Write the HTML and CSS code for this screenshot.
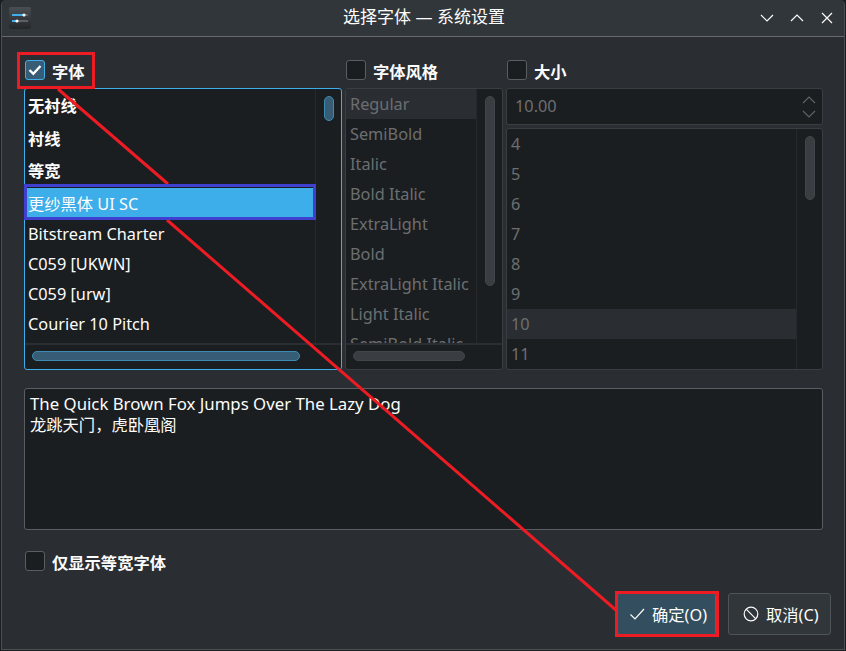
FILE: index.html
```html
<!DOCTYPE html>
<html>
  <head>
    <title>选择字体 — 系统设置</title>
    <meta charset="utf-8" />
    <link rel="stylesheet" href="styles.css">
  </head>
  <body>
    <div class="window">
      <header class="titlebar">
        <svg class="app-icon" width="22" height="22" viewBox="0 0 22 22">
          <defs>
            <linearGradient id="iconBg" x1="0" y1="0" x2="0" y2="1">
              <stop offset="0" stop-color="#4a4f54" />
              <stop offset="1" stop-color="#24272a" />
            </linearGradient>
          </defs>
          <rect width="22" height="22" rx="2" fill="url(#iconBg)" />
          <path d="M3 8h12" stroke="#3daee9" stroke-width="2" />
          <path d="M15 8h4M8 14h11" stroke="#6b7075" stroke-width="1.5" />
          <path d="M3 14h5" stroke="#3daee9" stroke-width="2" />
          <circle cx="15" cy="8" r="1.6" fill="#fcfcfc" />
          <circle cx="8" cy="14" r="1.6" fill="#fcfcfc" />
        </svg>
        <h1 class="title">选择字体 — 系统设置</h1>
        <div class="win-buttons">
          <svg width="14" height="14" viewBox="0 0 14 14"><path d="M1 4l6 6 6-6" /></svg>
          <svg width="14" height="14" viewBox="0 0 14 14"><path d="M1 10l6-6 6 6" /></svg>
          <svg width="14" height="14" viewBox="0 0 14 14"><path d="M2 2l10 10M12 2L2 12" /></svg>
        </div>
      </header>

      <main class="content">
        <div class="pickers">
          <section class="col">
            <label class="head"><span class="check on"><svg width="14" height="12" viewBox="0 0 14 12"><path d="M1.5 6l3.8 3.8L12.5 2" /></svg></span><span class="label">字体</span></label>
            <div class="list focused">
              <div class="list-body">
                <ul class="rows">
                  <li class="group">无衬线</li>
                  <li class="group">衬线</li>
                  <li class="group">等宽</li>
                  <li class="selected">更纱黑体 UI SC</li>
                  <li>Bitstream Charter</li>
                  <li>C059 [UKWN]</li>
                  <li>C059 [urw]</li>
                  <li>Courier 10 Pitch</li>
                </ul>
                <div class="vbar"><span class="thumb active thumb-font"></span></div>
              </div>
              <div class="hbar"><span class="thumb active hthumb-font"></span></div>
            </div>
          </section>

          <section class="col">
            <label class="head"><span class="check"></span><span class="label">字体风格</span></label>
            <div class="list disabled">
              <div class="list-body">
                <ul class="rows">
                  <li class="current">Regular</li>
                  <li>SemiBold</li>
                  <li>Italic</li>
                  <li>Bold Italic</li>
                  <li>ExtraLight</li>
                  <li>Bold</li>
                  <li>ExtraLight Italic</li>
                  <li>Light Italic</li>
                  <li>SemiBold Italic</li>
                </ul>
                <div class="vbar"><span class="thumb thumb-style"></span></div>
              </div>
              <div class="hbar"><span class="thumb hthumb-style"></span></div>
            </div>
          </section>

          <section class="col">
            <label class="head"><span class="check"></span><span class="label">大小</span></label>
            <div class="size-stack">
              <div class="spin">
                <span>10.00</span>
                <div class="spin-arrows">
                  <svg width="14" height="8" viewBox="0 0 14 8"><path d="M1 7l6-6 6 6" /></svg>
                  <svg width="14" height="8" viewBox="0 0 14 8"><path d="M1 1l6 6 6-6" /></svg>
                </div>
              </div>
              <div class="list disabled size-list">
                <div class="list-body">
                  <ul class="rows">
                    <li>4</li>
                    <li>5</li>
                    <li>6</li>
                    <li>7</li>
                    <li>8</li>
                    <li>9</li>
                    <li class="current">10</li>
                    <li>11</li>
                  </ul>
                  <div class="vbar"><span class="thumb thumb-size"></span></div>
                </div>
              </div>
            </div>
          </section>
        </div>

        <div class="preview"><span class="latin">The Quick Brown Fox Jumps Over The Lazy Dog</span>龙跳天门，虎卧凰阁</div>

        <label class="mono"><span class="check"></span><span class="label">仅显示等宽字体</span></label>

        <div class="actions">
          <button class="btn primary">
            <svg width="16" height="16" viewBox="0 0 16 16"><path d="M1.5 8.5l4.5 4.5 9-10" /></svg>
            确定(O)
          </button>
          <button class="btn">
            <svg width="16" height="16" viewBox="0 0 16 16"><circle cx="8" cy="8" r="6.8" /><path d="M3.2 3.2l9.6 9.6" /></svg>
            取消(C)
          </button>
        </div>
      </main>

      <!-- annotations drawn on top of the screenshot -->
      <svg class="marks" width="846" height="651" viewBox="0 0 846 651">
        <path d="M58 89L168 184M167 220L617 611" />
        <rect x="18.5" y="53.5" width="75" height="34" />
        <rect x="616.5" y="592.5" width="101" height="43" />
        <rect class="mark-blue" x="25.5" y="185.5" width="289" height="33" />
      </svg>
    </div>
  </body>
</html>
```

FILE: styles.css
```css
* {
  box-sizing: border-box;
}
html,
body {
  margin: 0;
  height: 100%;
  background: #1b1e20;
}
body {
  padding: 0 1px 1px 1px;
  font-family: "Noto Sans", "Noto Sans CJK SC", sans-serif;
  font-size: 16.3px;
  color: #fcfcfc;
}
ul {
  list-style: none;
  margin: 0;
  padding: 0;
}

.window {
  height: 650px;
  background: #2a2e32;
  border: 1px solid #4a4f54;
  border-top: 0;
  border-radius: 5px 5px 0 0;
  display: flex;
  flex-direction: column;
  overflow: hidden;
}

.titlebar {
  flex: none;
  height: 37px;
  background: #31363b;
  border-bottom: 1px solid #666a6e;
  display: flex;
  align-items: center;
  padding: 0 8px 0 7px;
}
.app-icon {
  flex: none;
}
.title {
  flex: 1;
  margin: 0;
  font-size: 17px;
  font-weight: 400;
  line-height: 22px;
  padding: 0 0 2px 57px;
  text-align: center;
}
.win-buttons {
  display: flex;
  gap: 16px;
  padding-right: 2px;
}
.win-buttons path {
  fill: none;
  stroke: #fcfcfc;
  stroke-width: 1.2;
}

.content {
  flex: 1;
  display: flex;
  flex-direction: column;
  padding: 15px 21px 0 22px;
}

.pickers {
  display: grid;
  grid-template-columns: 318px 158px 317px;
  grid-template-rows: 318px;
  gap: 3px;
}
.col {
  display: flex;
  flex-direction: column;
  min-width: 0;
  min-height: 0;
}
.head {
  flex: none;
  height: 36px;
  display: flex;
  align-items: center;
  gap: 7px;
  font-weight: 700;
  padding-left: 1px;
}
.label {
  padding-top: 2px;
}

.check {
  flex: none;
  width: 20px;
  height: 20px;
  border: 1px solid #5a5e62;
  border-radius: 3px;
  background: #1b1e20;
  display: flex;
  align-items: center;
  justify-content: center;
}
.check.on {
  background: #365d75;
  border-color: #3daee9;
}
.check path {
  fill: none;
  stroke: #fcfcfc;
  stroke-width: 2.4;
}

.list {
  flex: 1;
  min-height: 0;
  display: flex;
  flex-direction: column;
  background: #1b1e20;
  border: 1px solid #3a3e42;
  border-radius: 3px;
  overflow: hidden;
}
.list.focused {
  border-color: #3daee9;
}
.list-body {
  flex: 1;
  min-height: 0;
  display: flex;
}
.rows {
  flex: 1;
  min-width: 0;
  overflow: hidden;
  border-right: 1px solid #26292c;
}
.rows li {
  height: 30px;
  line-height: 31px;
  padding-left: 3px;
  white-space: nowrap;
}
.rows .group {
  height: 32.5px;
  line-height: 32px;
  font-weight: 700;
}
.rows .group:first-child {
  margin-top: 1px;
}
.rows .selected {
  height: 31.5px;
  line-height: 32px;
  background: #3daee9;
}
.list.disabled .rows li {
  padding-left: 4px;
  color: #6c6f71;
}
.list.disabled .rows .current {
  background: #2a2d31;
}

.vbar {
  flex: none;
  width: 25px;
  padding-top: 7px;
  display: flex;
  justify-content: center;
}
.hbar {
  flex: none;
  height: 26px;
  border-top: 2px solid #2a2e32;
  padding: 6px 0 0 7px;
}
.thumb {
  display: block;
  background: #3a3e42;
  border: 1px solid #41464b;
  border-radius: 5px;
}
.thumb.active {
  background: #365d75;
  border-color: #3d8ab3;
}
.thumb-font {
  width: 10px;
  height: 25px;
}
.thumb-style {
  width: 10px;
  height: 190px;
}
.thumb-size {
  width: 10px;
  height: 64px;
}
.hthumb-font {
  width: 268px;
  height: 10px;
}
.hthumb-style {
  width: 112px;
  height: 10px;
}

.size-stack {
  flex: 1;
  min-height: 0;
  display: flex;
  flex-direction: column;
  gap: 3px;
}
.spin {
  flex: none;
  height: 37px;
  background: #1b1e20;
  border: 1px solid #3a3e42;
  border-radius: 3px;
  display: flex;
  align-items: center;
  justify-content: space-between;
  padding: 0 6px 2px 8px;
  color: #6c6f71;
}
.spin-arrows {
  display: flex;
  flex-direction: column;
  gap: 6px;
  padding-top: 2px;
}
.spin-arrows svg {
  display: block;
}
.spin-arrows path {
  fill: none;
  stroke: #5f6366;
  stroke-width: 1.1;
}

.preview {
  flex: none;
  height: 142px;
  margin-top: 18px;
  width: 799px;
  background: #1b1e20;
  border: 1px solid #5a5e62;
  border-radius: 3px;
  padding: 5px 5px;
  line-height: 20px;
}
.latin {
  display: block;
  margin-bottom: 1px;
  font-size: 16.8px;
}

.mono {
  flex: none;
  display: flex;
  align-items: center;
  gap: 7px;
  margin-top: 20px;
  height: 22px;
  padding-left: 1px;
  font-weight: 700;
}

.actions {
  display: flex;
  justify-content: flex-end;
  gap: 12px;
  margin-top: 21px;
  margin-right: -8px;
}
.btn {
  width: 103px;
  height: 42px;
  padding: 0 0 0 14px;
  display: flex;
  align-items: center;
  gap: 7px;
  background: #31363b;
  border: 1px solid #4f5458;
  border-radius: 3px;
  color: #fcfcfc;
  font: inherit;
}
.btn svg {
  flex: none;
}
.btn path,
.btn circle {
  fill: none;
  stroke: #fcfcfc;
  stroke-width: 1.2;
}
.btn.primary {
  width: 99px;
  padding-left: 11px;
  background: #334e5e;
  border-color: #3b6e8a;
}

.marks {
  position: absolute;
  top: 0;
  left: 0;
}
.marks path,
.marks rect {
  fill: none;
  stroke: #ed1c24;
}
.marks path {
  stroke-width: 3;
}
.marks rect {
  stroke-width: 3;
}
.marks .mark-blue {
  stroke: #4040d0;
}
```
